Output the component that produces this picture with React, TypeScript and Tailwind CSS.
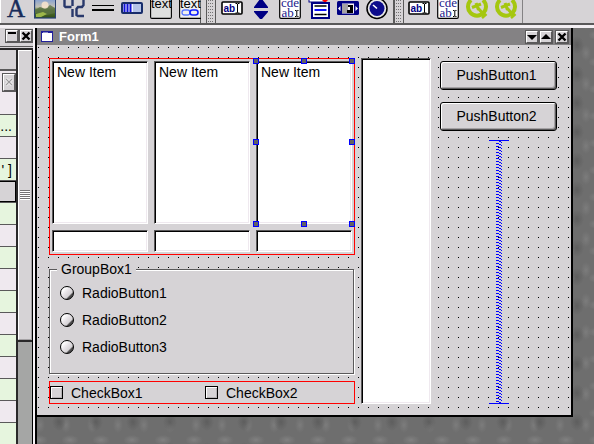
import type { ReactNode } from "react";

const SUNKEN =
  "border border-t-[#5a595a] border-l-[#5a595a] border-r-white border-b-white bg-white shadow-[inset_1px_1px_#000,inset_-1px_-1px_#efe9ef]";
const RAISED =
  "border border-t-white border-l-white border-r-[#5a595a] border-b-[#5a595a] bg-[#d6d3d6] shadow-[0_0_0_1px_#5a595a]";

function Icon({ children }: { children: ReactNode }) {
  return (
    <svg viewBox="0 0 22 20" className="h-5 w-[22px]" aria-hidden="true">
      {children}
    </svg>
  );
}

function Tool({ name, children }: { name: string; children: ReactNode }) {
  return (
    <button type="button" aria-label={name} className="h-5 w-[22px] shrink-0">
      <Icon>{children}</Icon>
    </button>
  );
}

function LineEditIcon() {
  return (
    <>
      <rect x="1" y="2" width="20" height="12" rx="1" fill="#fff" stroke="#000" strokeWidth="1.6" />
      <text x="2.5" y="12" fontSize="10" fontWeight="bold" fill="#000084" fontFamily="Liberation Sans, sans-serif">ab</text>
      <path d="M14.5 3.500h1.500l.5.5.5-.5h1.500M16.500 4v8.500M14.500 13h1.500l.5-.5.5.5h1.500" stroke="#000" strokeWidth="1" fill="none" />
    </>
  );
}

function MultiEditIcon() {
  return (
    <>
      <path d="M.7-2v19q0 1.300 1.300 1.300h18q1.300 0 1.300-1.300V-2" fill="#fff" stroke="#000" strokeWidth="1.200" />
      <text x="2" y="7" fontSize="13" fill="#21208c" fontFamily="Liberation Serif, serif">cde</text>
      <text x="2.500" y="17" fontSize="13" fill="#21208c" fontFamily="Liberation Serif, serif">ab</text>
      <path d="M16 10.500h1.200l.6.5.6-.5h1.100M17.800 11v5M16 16.500h1.200l.6-.5.6.5h1.100" stroke="#000" strokeWidth="1" fill="none" />
    </>
  );
}

function ClockIcon() {
  return (
    <>
      <path d="M5 0A9 9 0 1 0 17 0" fill="none" stroke="#a5c70f" strokeWidth="4" />
      <path d="M6 7.500l9-3.500M10 3l2.500 7M12 8l7 8" fill="none" stroke="#a5c70f" strokeWidth="3" />
      <path d="M16 18l4.500-4" stroke="#a5c70f" strokeWidth="2.500" />
    </>
  );
}

function Grip() {
  return (
    <span className="flex h-full w-[10px] justify-center border-x border-x-[#5a595a] px-px">
      <span className="h-full w-[6px] bg-[conic-gradient(from_0deg_at_1px_1px,transparent_75%,#737173_0)] bg-[length:2px_3px]" />
    </span>
  );
}

function Toolbar() {
  return (
    <header className="flex h-[28px] shrink-0 overflow-hidden border-b-3 border-b-[#f3eff3] bg-[#d6d3d6]">
      <div className="flex flex-1 border-b-2 border-b-[#5a595a]">
        <div className="flex w-[201px] gap-[7px] border-r border-r-[#5a595a] border-l border-l-white pl-1">
          <Tool name="Text label">
            <text x="2" y="17" fontSize="25" fill="#182c5a" stroke="#182c5a" strokeWidth=".5" fontFamily="Liberation Serif, serif">A</text>
          </Tool>
          <Tool name="Pixmap label">
            <defs>
              <linearGradient id="sky" x2="0" y2="1">
                <stop offset="0" stopColor="#7b9ad6" />
                <stop offset=".45" stopColor="#c5c3b5" />
                <stop offset=".6" stopColor="#5a7931" />
                <stop offset="1" stopColor="#314d18" />
              </linearGradient>
            </defs>
            <rect y="-2" x=".6" width="21" height="20" fill="url(#sky)" stroke="#294173" strokeWidth="1.200" />
            <path d="M1 10l5-3 5 2 5-4 5 3v5l-8 2-12-2z" fill="#5a7144" opacity=".8" />
            <circle cx="11" cy="5" r="3.500" fill="#ffe7ce" opacity=".8" />
            <path d="M2 14l7-2 4 2-6 3H2z" fill="#9cb64a" />
          </Tool>
          <Tool name="LCD number">
            <path d="M1.500 0v6l1 1h6M9.500 0v6M9.500 9v8M20.500 0v5l-1.500 2h-4l-1.500 2v6l1.500 1h6" fill="none" stroke="#29386b" strokeWidth="2.400" />
          </Tool>
          <Tool name="Line">
            <path d="M0 5.500h22" stroke="#000" strokeWidth="1" />
            <path d="M0 10h22" stroke="#000" strokeWidth="2" />
          </Tool>
          <Tool name="Progress bar">
            <rect x="1" y="3" width="20" height="10" rx="1" fill="#efefff" stroke="#182c6b" strokeWidth="2" />
            <rect x="12" y="4" width="8" height="8" fill="#b5c3e7" />
            <path d="M3.500 4v8M6.500 4v8M9.500 4v8" stroke="#1010d6" strokeWidth="2" />
          </Tool>
          <Tool name="Text view">
            <path d="M.6-2v19q0 1.400 1.400 1.400h18q1.400 0 1.400-1.400V-2" fill="#dedfde" stroke="#000" strokeWidth="1.100" />
            <text x="1" y="8" fontSize="13" fontFamily="Liberation Sans, sans-serif">text</text>
          </Tool>
          <Tool name="Text browser">
            <path d="M.6-2v19q0 1.400 1.400 1.400h20V-2" fill="#efefef" stroke="#000" strokeWidth="1.100" />
            <text x="1" y="8" fontSize="13" fontFamily="Liberation Sans, sans-serif">text</text>
            <rect x="3" y="10" width="8" height="5" rx="2.500" fill="none" stroke="#5a79ff" strokeWidth="1.300" />
            <rect x="11" y="10" width="8" height="5" rx="2.500" fill="none" stroke="#1020ff" strokeWidth="1.600" />
          </Tool>
        </div>
        <span className="w-[5px]" />
        <Grip />
        <div className="flex w-[178px] gap-[7px] border-r border-r-[#5a595a] pl-[5px]">
          <Tool name="Line edit"><LineEditIcon /></Tool>
          <Tool name="Spin box">
            <path d="M4 7L10-1h2l6 8v1H4zM4 11h14v1l-6 7h-2l-6-7z" fill="#000084" />
          </Tool>
          <Tool name="Multi line edit"><MultiEditIcon /></Tool>
          <Tool name="Combo box">
            <rect x="1" y="-2" width="16" height="4" fill="#fff" stroke="#000084" />
            <path d="M14 0h6l-3 3z" fill="#ff0000" />
            <rect x="4" y="3" width="17" height="15" fill="#fff" stroke="#000084" strokeWidth="2" />
            <path d="M6.500 6h12M6.500 14.500h12" stroke="#000" strokeWidth="1.500" />
            <path d="M6.500 10h12" stroke="#1010ff" strokeWidth="2" />
          </Tool>
          <Tool name="Slider">
            <rect x="0" y="1" width="22" height="14" rx="1.500" fill="#000084" />
            <rect x="5" y="3.500" width="12" height="10" fill="#f7f3f7" />
            <path d="M3.500 6v5L1 8.500zM18.500 6v5L21 8.500z" fill="#fff" />
            <rect x="5" y="4" width="6" height="9" fill="#a5a2a5" />
            <path d="M11 5h5v8h-6v-3h3V7h-2z" fill="#000" />
          </Tool>
          <Tool name="Dial">
            <circle cx="11" cy="8.500" r="10" fill="#e7e7e7" stroke="#000" strokeWidth="1.500" />
            <circle cx="11" cy="8.500" r="7.500" fill="#0c0c8c" />
            <path d="M7 5l4 3.500" stroke="#fff" strokeWidth="1.600" />
          </Tool>
        </div>
        <Grip />
        <div className="flex w-[119px] gap-[7px] border-r border-r-[#848284] pl-1">
          <Tool name="Data line edit"><LineEditIcon /></Tool>
          <Tool name="Data text edit"><MultiEditIcon /></Tool>
          <Tool name="Time edit"><ClockIcon /></Tool>
          <Tool name="Date edit"><ClockIcon /></Tool>
        </div>
      </div>
    </header>
  );
}

function FrameButton({ name, children }: { name: string; children: ReactNode }) {
  return (
    <button type="button" aria-label={name} className={`m-px flex h-3 w-3 items-center justify-center ${RAISED}`}>
      <svg viewBox="0 0 10 10" className="h-[10px] w-[10px] shrink-0" aria-hidden="true">{children}</svg>
    </button>
  );
}

const CROSS = <path d="M1.500 1.500l7 7M8.500 1.500l-7 7" stroke="#000" strokeWidth="2.400" />;

const rows = [
  { tone: "bg-[#efe9ef]", text: "" },
  { tone: "bg-[#e6f5de]", text: "u..." },
  { tone: "bg-[#efe9ef]", text: "" },
  { tone: "bg-[#e6f5de]", text: "' ]" },
  { tone: "bg-[#d6d3d6] shadow-[inset_-1px_1px_#000,inset_0_-1px_#000]", text: "" },
  { tone: "bg-[#e6f5de]", text: "" },
  { tone: "bg-[#efe9ef]", text: "" },
  { tone: "bg-[#e6f5de]", text: "" },
  { tone: "bg-[#efe9ef]", text: "" },
  { tone: "bg-[#e6f5de]", text: "" },
  { tone: "bg-[#efe9ef]", text: "" },
  { tone: "bg-[#e6f5de]", text: "" },
  { tone: "bg-[#efe9ef]", text: "" },
  { tone: "bg-[#e6f5de]", text: "" },
  { tone: "bg-[#efe9ef]", text: "" },
];

function PropertyPane() {
  return (
    <aside className="flex w-[37px] shrink-0 flex-col border-r-2 border-r-black bg-[#d6d3d6]">
      <div className="flex flex-1 flex-col border-r-2 border-r-[#f7f3f7]">
        <div className="flex h-[19px] justify-end border-b border-b-[#5a595a] pt-px">
          <FrameButton name="Shade"><path d="M1 2h8" stroke="#000" strokeWidth="2" /></FrameButton>
          <FrameButton name="Close properties">{CROSS}</FrameButton>
        </div>
        <div className="mt-px flex flex-1 border-t-2 border-t-[#292829]">
          <div className="flex w-4 flex-col">
            <div className="h-[21px] border-b-2 border-b-[#5a595a]" />
            <div className="flex h-[22px] items-center justify-end bg-[#efe9ef] pr-px">
              <button type="button" aria-label="Reset" className={`flex h-[17px] w-3 items-center justify-center ${RAISED}`}>
                <svg viewBox="0 0 8 8" className="h-2 w-2" aria-hidden="true">
                  <path d="M1 1l6 6M7 1L1 7" stroke="#fff" strokeWidth="2.500" />
                  <path d="M1 1l6 6M7 1L1 7" stroke="#9c9a9c" strokeWidth="1.300" />
                </svg>
              </button>
            </div>
            {rows.map((row, i) => (
              <div key={i} className={`flex h-[22px] justify-end overflow-hidden border-b border-b-[#5a595a] pr-1 leading-[22px] whitespace-nowrap ${row.tone}`}>
                {row.text}
              </div>
            ))}
            <div className="flex-1 bg-[#e6f5de]" />
          </div>
          <div className="flex flex-1 flex-col border-r border-l-2 border-r-black border-l-[#292829] bg-[#a5a6a5]">
            <div className="flex h-[290px] flex-col items-center justify-center border border-t-white border-r-[#a5a2a5] border-b-[#a5a2a5] border-l-white bg-[#d6d3d6]">
              <span className="h-[10px] w-[10px] bg-[linear-gradient(#737173_50%,#fff_50%)] bg-[length:10px_2px]" />
            </div>
            <span className="h-0.5 bg-[#292829]" />
          </div>
        </div>
      </div>
    </aside>
  );
}

const handles = [
  "-top-1 -left-1",
  "-top-1 left-[calc(50%-3px)]",
  "-top-1 -right-1",
  "top-[calc(50%-4px)] -left-1",
  "top-[calc(50%-4px)] -right-1",
  "-bottom-1 -left-1",
  "-bottom-1 left-[calc(50%-3px)]",
  "-bottom-1 -right-1",
];

function ListBox({ selected = false }: { selected?: boolean }) {
  return (
    <div role="listbox" aria-label="Items" className={`relative h-[163px] px-1 pt-px ${SUNKEN}`}>
      <div role="option" aria-selected={false} className="leading-[18px]">New Item</div>
      {selected &&
        handles.map((place) => (
          <span key={place} className={`absolute h-1.5 w-1.5 border border-[#0000ff] bg-[#636163] ${place}`} />
        ))}
    </div>
  );
}

function Radio({ label }: { label: string }) {
  return (
    <label className="flex h-[27px] items-center gap-2">
      <input
        type="radio"
        name="group1"
        className="h-[14px] w-[14px] appearance-none rounded-full border border-black bg-[linear-gradient(135deg,#fff_20%,#e7e3e7_45%,#d6d3d6_68%,#4a494a_76%)]"
      />
      {label}
    </label>
  );
}

function Check({ label }: { label: string }) {
  return (
    <label className="flex items-center gap-2">
      <input
        type="checkbox"
        className="h-[13px] w-[13px] appearance-none border border-black bg-[#d6d3d6] shadow-[inset_1px_1px_#fff,inset_-1px_-1px_#b5b2b5]"
      />
      {label}
    </label>
  );
}

function PushButton({ label }: { label: string }) {
  return (
    <button
      type="button"
      className="h-[29px] rounded-[3px] border border-black bg-[#d6d3d6] pr-1 leading-[27px] shadow-[inset_1px_1px_#fff,inset_-1px_-1px_#5a595a,inset_-2px_-2px_#a5a2a5]"
    >
      {label}
    </button>
  );
}

function Spacer() {
  return (
    <svg className="min-h-0 w-5 flex-1 self-center" aria-hidden="true">
      <defs>
        <pattern id="spring" width="6" height="3" patternUnits="userSpaceOnUse" x="7">
          <path d="M0 .5h3M3 1.500h2M5 2.500h1" stroke="#0000ff" />
        </pattern>
      </defs>
      <rect x="7" width="6" height="100%" fill="url(#spring)" />
      <rect width="20" height="1" fill="#0000ff" />
      <svg y="100%" overflow="visible">
        <rect y="-1" width="20" height="1" fill="#0000ff" />
      </svg>
    </svg>
  );
}

function FormWindow() {
  return (
    <section className="mr-[21px] flex-1 self-start border-r-2 border-b-2 border-r-black border-b-black bg-[#d6d3d6]">
      <div className="flex h-[17px] items-center bg-[#848284] pr-0.5 pl-1">
        <svg viewBox="0 0 12 11" className="h-[11px] w-3" aria-hidden="true">
          <rect x=".5" y=".5" width="11" height="10" fill="#fff" stroke="#21209c" />
          <path d="M0 1h12" stroke="#21209c" strokeWidth="2" />
          <path d="M2 2h5" stroke="#fff" />
        </svg>
        <h1 className="ml-1.5 flex-1 text-[13px] leading-[17px] font-bold text-white">Form1</h1>
        <FrameButton name="Minimize"><path d="M0 3h10L5 8z" /></FrameButton>
        <FrameButton name="Maximize"><path d="M0 7h10L5 2z" /></FrameButton>
        <span className="w-0.5" />
        <FrameButton name="Close form">{CROSS}</FrameButton>
      </div>
      <div className="flex bg-[conic-gradient(from_0deg_at_1px_1px,transparent_75%,#000_0)] bg-[length:10px_10px] bg-[position:1px_2px] pt-[13px] pr-[14px] pb-[11px] pl-3">
        <div className="flex min-w-0 flex-1 flex-col">
          <div className="grid grid-cols-3 gap-1.5 border border-[#ff0000] bg-[#d6d3d6] p-0.5">
            <ListBox />
            <ListBox />
            <ListBox selected />
            <input aria-label="Field 1" className={`h-[22px] w-full min-w-0 ${SUNKEN}`} />
            <input aria-label="Field 2" className={`h-[22px] w-full min-w-0 ${SUNKEN}`} />
            <input aria-label="Field 3" className={`h-[22px] w-full min-w-0 ${SUNKEN}`} />
          </div>
          <fieldset className="mt-1.5 mr-px min-w-0 border border-[#5a595a] bg-[#d6d3d6] px-[10px] pt-px pb-[13px] shadow-[inset_1px_1px_#fff,1px_1px_#fff]">
            <legend className="-ml-[3px] bg-[#d6d3d6] px-1 leading-[17px]">GroupBox1</legend>
            <Radio label="RadioButton1" />
            <Radio label="RadioButton2" />
            <Radio label="RadioButton3" />
          </fieldset>
          <div className="mt-[7px] grid h-[23px] grid-cols-2 gap-1.5 border border-[#ff0000] bg-[#d6d3d6]">
            <Check label="CheckBox1" />
            <Check label="CheckBox2" />
          </div>
        </div>
        <div role="listbox" aria-label="Values" className={`ml-1.5 w-[70px] ${SUNKEN}`} />
        <div className="ml-[9px] flex w-[117px] flex-col gap-3 pt-[3px]">
          <PushButton label="PushButton1" />
          <PushButton label="PushButton2" />
          <div className="-mt-[3px] flex flex-1 flex-col">
            <Spacer />
          </div>
        </div>
      </div>
    </section>
  );
}

export default function App() {
  return (
    <div className="flex min-h-screen flex-col bg-[#6e6e6e] bg-[radial-gradient(ellipse_9px_5px_at_8px_8px,#808080,transparent),radial-gradient(ellipse_7px_9px_at_22px_16px,#5e5e5e,transparent),radial-gradient(ellipse_5px_8px_at_14px_22px,#7c7c7c,transparent)] bg-[length:31px_27px,37px_29px,26px_31px] font-['Liberation_Sans',Arial,sans-serif] text-sm text-black">
      <Toolbar />
      <main className="flex flex-1">
        <PropertyPane />
        <FormWindow />
      </main>
    </div>
  );
}
